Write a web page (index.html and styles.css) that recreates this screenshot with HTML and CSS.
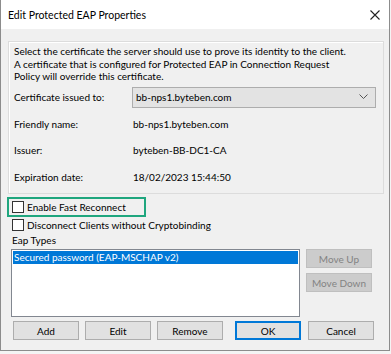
FILE: index.html
```html
<!DOCTYPE html>
<html>
<head>
<meta charset="utf-8">
<link rel="stylesheet" href="styles.css">
</head>
<body>
<div class="window">
  <div class="titlebar">
    <span class="title">Edit Protected EAP Properties</span>
    <svg class="close" width="10" height="10" viewBox="0 0 10 10"><path d="M0.5 0.5 L9.5 9.5 M9.5 0.5 L0.5 9.5" stroke="#222" stroke-width="1.1" fill="none"/></svg>
  </div>
  <div class="content">
    <div class="group">
      <p class="desc">Select the certificate the server should use to prove its identity to the client.<br>A certificate that is configured for Protected EAP in Connection Request<br>Policy will override this certificate.</p>
      <div class="row combo-row">
        <span class="label">Certificate issued to:</span>
        <div class="combo"><span>bb-nps1.byteben.com</span>
          <svg width="9" height="6" viewBox="0 0 9 6"><path d="M0.5 0.5 L4.5 4.5 L8.5 0.5" stroke="#555" fill="none"/></svg>
        </div>
      </div>
      <div class="row"><span class="label">Friendly name:</span><span class="value">bb-nps1.byteben.com</span></div>
      <div class="row"><span class="label">Issuer:</span><span class="value">byteben-BB-DC1-CA</span></div>
      <div class="row"><span class="label">Expiration date:</span><span class="value">18/02/2023 15:44:50</span></div>
    </div>
    <div class="highlight">
      <label class="check"><span class="box"></span>Enable Fast Reconnect</label>
    </div>
    <label class="check second"><span class="box"></span>Disconnect Clients without Cryptobinding</label>
    <div class="eap-label">Eap Types</div>
    <div class="eap-area">
      <div class="list"><div class="item selected">Secured password (EAP-MSCHAP v2)</div></div>
      <div class="side">
        <button class="btn disabled">Move Up</button>
        <button class="btn disabled">Move Down</button>
      </div>
    </div>
    <div class="buttons">
      <div class="left-btns">
        <button class="btn">Add</button>
        <button class="btn">Edit</button>
        <button class="btn">Remove</button>
      </div>
      <div class="right-btns">
        <button class="btn default">OK</button>
        <button class="btn">Cancel</button>
      </div>
    </div>
  </div>
</div>
</body>
</html>
```
FILE: styles.css
```css
* { box-sizing: border-box; }
html, body { margin: 0; padding: 0; background: #f4f4f4; }
body {
  font-family: Lato, "Liberation Sans", sans-serif;
  font-size: 10px;
  color: #000;
  width: 391px;
  height: 354px;
  white-space: nowrap;
}
.window {
  width: 390px;
  height: 351px;
  background: #f0f0f0;
  border-left: 1px solid #8c8c8c;
  border-right: 1px solid #8c8c8c;
  border-bottom: 1px solid #8c8c8c;
  display: flex;
  flex-direction: column;
}
.titlebar {
  height: 29px;
  background: #fff;
  display: flex;
  align-items: center;
  justify-content: space-between;
  padding: 0 9px 0 7px;
  flex: none;
}
.title { font-size: 10.5px; }
.content {
  padding: 12px 6px 0 7px;
  display: flex;
  flex-direction: column;
}
.group {
  flex: none;
  width: 376px;
  height: 153px;
  border: 1px solid #dcdcdc;
  box-shadow: inset 1px 1px 0 #fff;
  padding: 3px 5px 0 5px;
  overflow: hidden;
}
.desc {
  margin: 0;
  line-height: 12.5px;
}
.row {
  display: flex;
  align-items: center;
  height: 26.5px;
}
.combo-row { height: 21px; margin-top: 4px; margin-bottom: 3px; }
.label { width: 118px; flex: none; }
.value { padding-left: 1px; }
.combo {
  width: 244px;
  height: 21px;
  background: #e3e3e3;
  border: 1px solid #adadad;
  display: flex;
  align-items: center;
  justify-content: space-between;
  padding: 0 7px 0 3px;
}
.highlight {
  flex: none;
  margin-top: 3px;
  margin-left: -1px;
  width: 139px;
  height: 20px;
  border: 2px solid #1fa67e;
  display: flex;
  align-items: center;
  padding-left: 3px;
}
.check {
  display: flex;
  align-items: center;
  height: 14px;
}
.box {
  width: 12px;
  height: 12px;
  border: 1px solid #333;
  background: #fff;
  margin-right: 3px;
  flex: none;
}
.second { padding-left: 4px; height: 15px; }
.eap-label { padding-left: 4px; height: 17px; line-height: 17px; }
.eap-area {
  display: flex;
  padding-left: 3px;
  height: 68px;
}
.list {
  width: 289px;
  height: 68px;
  background: #fff;
  border: 1px solid #828790;
  padding: 1px;
}
.item {
  height: 13px;
  line-height: 13px;
  padding-left: 1px;
}
.selected { background: #0078d7; color: #fff; }
.side {
  display: flex;
  flex-direction: column;
  gap: 5px;
  margin-left: 6px;
  padding-top: 0px;
}
.btn {
  font-family: inherit;
  font-size: 10px;
  width: 66px;
  height: 19px;
  background: #e1e1e1;
  border: 1px solid #adadad;
  color: #000;
  padding: 0;
  margin: 0;
}
.disabled { background: #cccccc; border-color: #bfbfbf; color: #838383; }
.default { border: 2px solid #0078d7; }
.buttons {
  display: flex;
  justify-content: space-between;
  margin-top: 4px;
  padding-left: 5px;
  padding-right: 9px;
}
.left-btns, .right-btns { display: flex; gap: 6px; }
.right-btns { gap: 7px; }
```
